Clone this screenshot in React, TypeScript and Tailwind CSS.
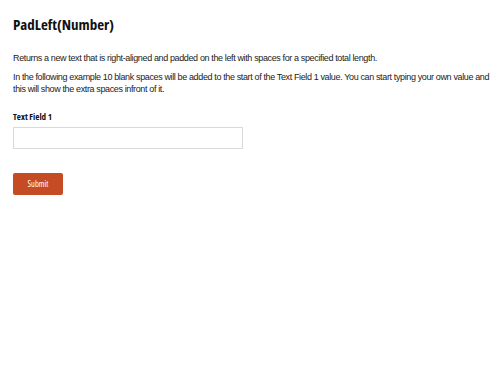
import React from "react";

export default function App() {
  return (
    <div className="flex min-h-[375px] w-[500px] flex-col items-start bg-white pl-[13px] pr-[6px] pt-[14px]">
      <h1 className="font-['Open_Sans',sans-serif] text-[15px] font-bold leading-[20px] text-[#111] font-stretch-condensed">
        PadLeft(Number)
      </h1>
      <div className="mt-[18px] flex flex-col gap-[7px] font-['Liberation_Sans',Arial,sans-serif] text-[9px] leading-[12px] tracking-[-0.37px] text-[#222]">
        <p>Returns a new text that is right-aligned and padded on the left with spaces for a specified total length.</p>
        <p>
          In the following example 10 blank spaces will be added to the start of the Text Field 1 value. You can start typing your own value and this will show the extra spaces infront of it.
        </p>
      </div>
      <label className="mt-[16px] font-['Open_Sans',sans-serif] text-[9px] font-bold leading-[12px] text-[#111] font-stretch-condensed">
        Text Field 1
      </label>
      <input className="mt-[4px] h-[22px] w-[230px] border border-[#d9d9d9] bg-white" />
      <button className="mt-[24px] h-[22px] w-[50px] rounded-[2px] bg-[#c54b25] font-['Open_Sans',sans-serif] text-[8.5px] text-white font-stretch-condensed">
        Submit
      </button>
    </div>
  );
}
